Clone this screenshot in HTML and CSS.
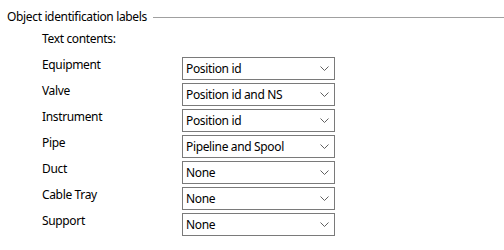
FILE: index.html
```html
<!DOCTYPE html>
<html lang="en">
<head>
  <meta charset="UTF-8">
  <title>Object identification labels</title>
  <link rel="stylesheet" href="styles.css">
</head>
<body>

  <div class="grupo">
    <div class="grupo-titulo">
      <span>Object identification labels</span>
      <div class="linha"></div>
    </div>

    <div class="subtitulo">Text contents:</div>

    <div class="campos">
      <label>Equipment</label>
      <div class="combo"><span>Position id</span><svg width="9" height="5" viewBox="0 0 9 5"><path d="M0.5 0.5 L4.5 4.5 L8.5 0.5" /></svg></div>

      <label>Valve</label>
      <div class="combo"><span>Position id and NS</span><svg width="9" height="5" viewBox="0 0 9 5"><path d="M0.5 0.5 L4.5 4.5 L8.5 0.5" /></svg></div>

      <label>Instrument</label>
      <div class="combo"><span>Position id</span><svg width="9" height="5" viewBox="0 0 9 5"><path d="M0.5 0.5 L4.5 4.5 L8.5 0.5" /></svg></div>

      <label>Pipe</label>
      <div class="combo"><span>Pipeline and Spool</span><svg width="9" height="5" viewBox="0 0 9 5"><path d="M0.5 0.5 L4.5 4.5 L8.5 0.5" /></svg></div>

      <label>Duct</label>
      <div class="combo"><span>None</span><svg width="9" height="5" viewBox="0 0 9 5"><path d="M0.5 0.5 L4.5 4.5 L8.5 0.5" /></svg></div>

      <label>Cable Tray</label>
      <div class="combo"><span>None</span><svg width="9" height="5" viewBox="0 0 9 5"><path d="M0.5 0.5 L4.5 4.5 L8.5 0.5" /></svg></div>

      <label>Support</label>
      <div class="combo"><span>None</span><svg width="9" height="5" viewBox="0 0 9 5"><path d="M0.5 0.5 L4.5 4.5 L8.5 0.5" /></svg></div>
    </div>
  </div>

</body>
</html>
```

FILE: styles.css
```css
body {
  font-family: 'Noto Sans', 'Open Sans', sans-serif;
  font-size: 12px;
  letter-spacing: -0.35px;
  margin: 0;
  background-color: #fff;
  color: #000;
}

.grupo {
  padding: 9px 0 0 7px;
}

.grupo-titulo {
  display: flex;
  align-items: center;
  gap: 6px;
  line-height: 16px;
}

.linha {
  flex: 1;
  border-top: 1px solid #a0a0a0;
  margin-top: 1px;
}

.subtitulo {
  margin: 6px 0 0 35px;
  line-height: 16px;
}

.campos {
  display: grid;
  grid-template-columns: 140px 153px;
  grid-auto-rows: 23px;
  row-gap: 3px;
  margin: 10px 0 0 35px;
}

.campos label {
  line-height: 16px;
}

.combo {
  display: flex;
  align-items: center;
  justify-content: space-between;
  border: 1px solid #7a7a7a;
  padding: 0 5px 0 3px;
  line-height: 16px;
}

.combo svg path {
  fill: none;
  stroke: #606060;
  stroke-width: 1;
}
```
